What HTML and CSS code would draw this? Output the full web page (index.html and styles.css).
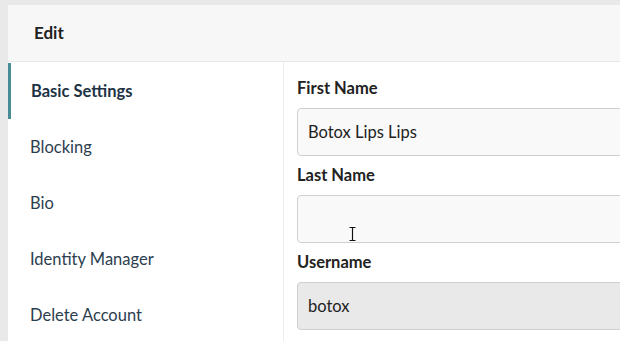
FILE: index.html
```html
<!DOCTYPE html>
<html lang="en">
<head>
    <meta charset="UTF-8">
    <meta name="viewport" content="width=device-width, initial-scale=1.0">
    <title>Edit profile</title>
    <link rel="stylesheet" href="styles.css">
</head>
<body>
    <div class="card">
        <header class="card-header">Edit</header>

        <div class="card-body">
            <nav class="sidebar">
                <a href="#" class="nav-item active">Basic Settings</a>
                <a href="#" class="nav-item">Blocking</a>
                <a href="#" class="nav-item">Bio</a>
                <a href="#" class="nav-item">Identity Manager</a>
                <a href="#" class="nav-item">Delete Account</a>
            </nav>

            <main class="form">
                <div class="field">
                    <label for="first">First Name</label>
                    <input id="first" type="text" value="Botox Lips Lips">
                </div>
                <div class="field">
                    <label for="last">Last Name</label>
                    <div class="input-wrap">
                        <input id="last" type="text" value="">
                        <!-- mouse cursor from the screenshot -->
                        <svg class="cursor" width="9" height="16" viewBox="0 0 9 16">
                            <path d="M1 1h7M1 15h7M4.5 1v14" stroke="#fff" stroke-width="3" fill="none"/>
                            <path d="M1.5 1.5h6M1.5 14.5h6M4.5 1.5v13" stroke="#111" stroke-width="1.2" fill="none"/>
                        </svg>
                    </div>
                </div>
                <div class="field">
                    <label for="user">Username</label>
                    <input id="user" type="text" value="botox" class="disabled" readonly>
                </div>
            </main>
        </div>
    </div>
</body>
</html>
```

FILE: styles.css
```css
* {
    margin: 0;
    padding: 0;
    box-sizing: border-box;
}

html, body {
    height: 100%;
    overflow: hidden;
}

body {
    font-family: Lato, 'Noto Sans', sans-serif;
    background: #e9e9e9;
    padding: 5px 0 0 8px;
}

.card {
    height: 100%;
    background: #fff;
    overflow: hidden;
}

.card-header {
    height: 57px;
    background: #f7f7f7;
    border-bottom: 1px solid #e8e8e8;
    padding: 0 0 1px 26px;
    display: flex;
    align-items: center;
    font-weight: bold;
    font-size: 17px;
    color: #222;
}

.card-body {
    display: flex;
    height: calc(100% - 57px);
}

.sidebar {
    width: 276px;
    flex-shrink: 0;
    border-right: 1px solid #ececec;
    display: flex;
    flex-direction: column;
    padding-top: 1px;
}

.nav-item {
    height: 56px;
    flex-shrink: 0;
    display: flex;
    align-items: center;
    padding-left: 19px;
    font-size: 16.5px;
    color: #2c3e4e;
    text-decoration: none;
    border-left: 3px solid transparent;
}

.nav-item.active {
    border-left-color: #4a8c96;
    font-weight: bold;
    color: #1d3344;
    padding-left: 20px;
}

.form {
    flex: 1;
    min-width: 0;
    padding: 16px 0 0 13px;
    overflow: hidden;
}

.field {
    margin-bottom: 9px;
}

.field label {
    display: block;
    height: 20px;
    line-height: 20px;
    margin-bottom: 10px;
    font-weight: bold;
    font-size: 16.5px;
    color: #222;
}

.input-wrap {
    position: relative;
}

.field input {
    display: block;
    width: calc(100% + 10px);
    height: 48px;
    border: 1px solid #cfcfcf;
    border-radius: 4px;
    background: #f9f9f9;
    padding: 0 10px;
    font-family: inherit;
    font-size: 16.5px;
    color: #222;
    outline: none;
}

.field input.disabled {
    background: #e9e9e9;
}

.cursor {
    position: absolute;
    left: 51px;
    top: 31px;
}
```
